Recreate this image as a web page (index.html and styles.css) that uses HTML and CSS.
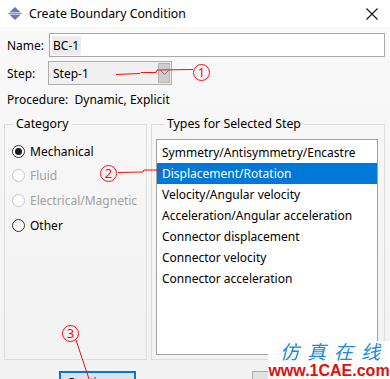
FILE: index.html
```html
<!DOCTYPE html>
<html>
<head>
<meta charset="utf-8">
<link rel="stylesheet" href="styles.css">
</head>
<body>
<div class="dialog">
  <div class="titlebar">
    <svg class="app-icon" width="16" height="14" viewBox="0 0 16 14">
      <polygon points="8,0 13.5,5.2 2.5,5.2" fill="#6f73b8"/>
      <polygon points="0.5,6.5 2.5,5.8 13.5,5.8 15.5,6.5 13.5,7.2 2.5,7.2" fill="#8c90cc"/>
      <polygon points="2.5,7.8 13.5,7.8 8,13" fill="#6f73b8"/>
    </svg>
    <span class="title">Create Boundary Condition</span>
    <svg class="close" width="12" height="12" viewBox="0 0 12 12">
      <path d="M0.5 0.5 L11.5 11.5 M11.5 0.5 L0.5 11.5" stroke="#111" stroke-width="1.1" fill="none"/>
    </svg>
  </div>
  <div class="content">
    <div class="field-row name-row">
      <span class="label">Name:</span>
      <div class="textbox"><span class="sel-text">BC-1</span></div>
    </div>
    <div class="field-row step-row">
      <span class="label">Step:</span>
      <div class="combo">
        <span class="combo-text">Step-1</span>
        <span class="combo-btn">
          <svg width="9" height="6" viewBox="0 0 9 6"><path d="M0.5 0.5 L4.5 4.5 L8.5 0.5" stroke="#777" stroke-width="1" fill="none"/></svg>
        </span>
      </div>
    </div>
    <div class="procedure">Procedure:&nbsp; Dynamic, Explicit</div>
    <div class="groups">
      <fieldset class="group category">
        <legend>Category</legend>
        <div class="radio checked"><span class="dot"></span>Mechanical</div>
        <div class="radio disabled"><span class="dot"></span>Fluid</div>
        <div class="radio disabled"><span class="dot"></span>Electrical/Magnetic</div>
        <div class="radio"><span class="dot"></span>Other</div>
      </fieldset>
      <fieldset class="group types">
        <legend>Types for Selected Step</legend>
        <ul class="listbox">
          <li>Symmetry/Antisymmetry/Encastre</li>
          <li class="selected">Displacement/Rotation</li>
          <li>Velocity/Angular velocity</li>
          <li>Acceleration/Angular acceleration</li>
          <li>Connector displacement</li>
          <li>Connector velocity</li>
          <li>Connector acceleration</li>
        </ul>
      </fieldset>
    </div>
    <div class="buttons">
      <button class="btn primary">Continue...</button>
      <button class="btn">Cancel</button>
    </div>
  </div>

  <svg class="annot-lines" width="390" height="379" viewBox="0 0 390 379">
    <polyline points="116,74.5 140,73.5 141,72.5 156,72.5 157,70 193,69.5" stroke="#ee1111" stroke-width="1" fill="none"/>
    <polyline points="118,172.5 143,172 144,170 163,170" stroke="#ee1111" stroke-width="1" fill="none"/>
    <polyline points="76,340 89,379" stroke="#ee1111" stroke-width="1" fill="none"/>
  </svg>
  <span class="mark mark1">1</span>
  <span class="mark mark2">2</span>
  <span class="mark mark3">3</span>

  <div class="watermark">
    <div class="wm-cn">仿真在线</div>
    <div class="wm-url">www.1CAE.com</div>
  </div>
</div>
</body>
</html>
```
FILE: styles.css
```css
* { box-sizing: border-box; }
html, body { margin: 0; padding: 0; }
body {
  width: 390px;
  height: 379px;
  overflow: hidden;
  font-family: "Noto Sans", "Liberation Sans", sans-serif;
  font-size: 12px;
  color: #000;
}
.dialog {
  position: relative;
  width: 390px;
  height: 379px;
  overflow: hidden;
  background: linear-gradient(#ffffff 0px, #f9f9f9 30px, #f2f2f2 379px);
}
.titlebar {
  display: flex;
  align-items: center;
  height: 27px;
  padding: 0 12px 0 7px;
  background: #ffffff;
}
.app-icon { flex: none; margin-right: 6px; }
.title { flex: 1; font-size: 12.3px; line-height: 16px; }
.close { flex: none; margin-top: 1px; }

.content { padding: 6px 5px 0 4px; }
.field-row {
  display: flex;
  align-items: center;
  height: 24px;
  padding-left: 3px;
}
.step-row { margin-top: 4px; }
.label { width: 42px; flex: none; }
.textbox {
  width: 337px;
  height: 24px;
  border: 1px solid #a8a8a8;
  background: #fff;
  padding: 2px 2px;
  display: flex;
  align-items: center;
}
.sel-text {
  background: #ececec;
  padding: 1px 2px 1px 1px;
  line-height: 17px;
}
.combo {
  width: 124px;
  height: 24px;
  margin-left: -1px;
  border: 1px solid #adadad;
  background: #f0f0f0;
  display: flex;
  align-items: center;
  padding: 1px 1px 1px 4px;
}
.combo-text { flex: 1; }
.combo-btn {
  width: 12px;
  height: 20px;
  background: #cdcdcd;
  border: 1px solid #b4b4b4;
  display: flex;
  align-items: center;
  justify-content: center;
}
.procedure {
  padding-left: 3px;
  margin-top: 6px;
  line-height: 18px;
}
.groups {
  display: flex;
  gap: 4px;
  margin-top: 7px;
}
.group {
  margin: 0;
  padding: 0;
  border: 1px solid #dcdcdc;
  height: 244px;
  min-width: 0;
}
.group legend {
  margin-left: 8px;
  padding: 0 3px;
  line-height: 16px;
  font-size: 12.3px;
}
.category { width: 143px; padding-top: 7px; }
.types { width: 234px; padding: 7px 6px 4px 4px; }

.radio {
  display: flex;
  align-items: center;
  height: 24.6px;
  padding-left: 7px;
  white-space: nowrap;
}
.dot {
  width: 13px;
  height: 13px;
  border: 1px solid #333;
  border-radius: 50%;
  margin-right: 5px;
  display: flex;
  align-items: center;
  justify-content: center;
  background: #fff;
}
.radio.checked .dot::after {
  content: "";
  width: 7px;
  height: 7px;
  border-radius: 50%;
  background: #1a1a1a;
}
.radio.disabled { color: #a0a0a0; }
.radio.disabled .dot { border-color: #c4c4c4; }

.listbox {
  list-style: none;
  margin: 0;
  padding: 2px 0 0 0;
  height: 100%;
  border: 1px solid #a2a2a2;
  background: #fff;
}
.listbox li {
  height: 21px;
  line-height: 21px;
  padding-left: 5px;
  white-space: nowrap;
}
.listbox li.selected {
  background: #0078d7;
  color: #fff;
}
.buttons {
  display: flex;
  margin-top: 11px;
  padding-left: 55px;
  gap: 116px;
}
.btn {
  width: 77px;
  height: 23px;
  font-family: inherit;
  font-size: 12px;
  background: #e1e1e1;
  border: 1px solid #adadad;
  padding: 0;
}
.btn.primary { border: 2px solid #0078d7; }

.annot-lines {
  position: absolute;
  left: 0;
  top: 0;
  pointer-events: none;
}
.mark {
  position: absolute;
  width: 17px;
  height: 17px;
  border: 1px solid #ee1111;
  border-radius: 50%;
  color: #ee1111;
  font-family: "Noto Sans", sans-serif;
  font-size: 13px;
  line-height: 15px;
  text-align: center;
}
.mark1 { left: 193px; top: 64px; }
.mark2 { left: 100px; top: 165px; }
.mark3 { left: 62px; top: 325px; }

.watermark {
  position: absolute;
  left: 268px;
  top: 341px;
  width: 122px;
  height: 38px;
  background: rgba(255,255,255,0.9);
  text-align: center;
}
.wm-cn {
  font-family: "Noto Sans CJK SC", sans-serif;
  color: #1a8ad4;
  font-size: 19px;
  line-height: 20px;
  letter-spacing: 8px;
  padding-left: 10px;
  font-style: italic;
}
.wm-url {
  font-family: "Liberation Sans", sans-serif;
  font-weight: bold;
  color: #dd1111;
  font-size: 16px;
  line-height: 17px;
  margin-top: 1px;
}
```
